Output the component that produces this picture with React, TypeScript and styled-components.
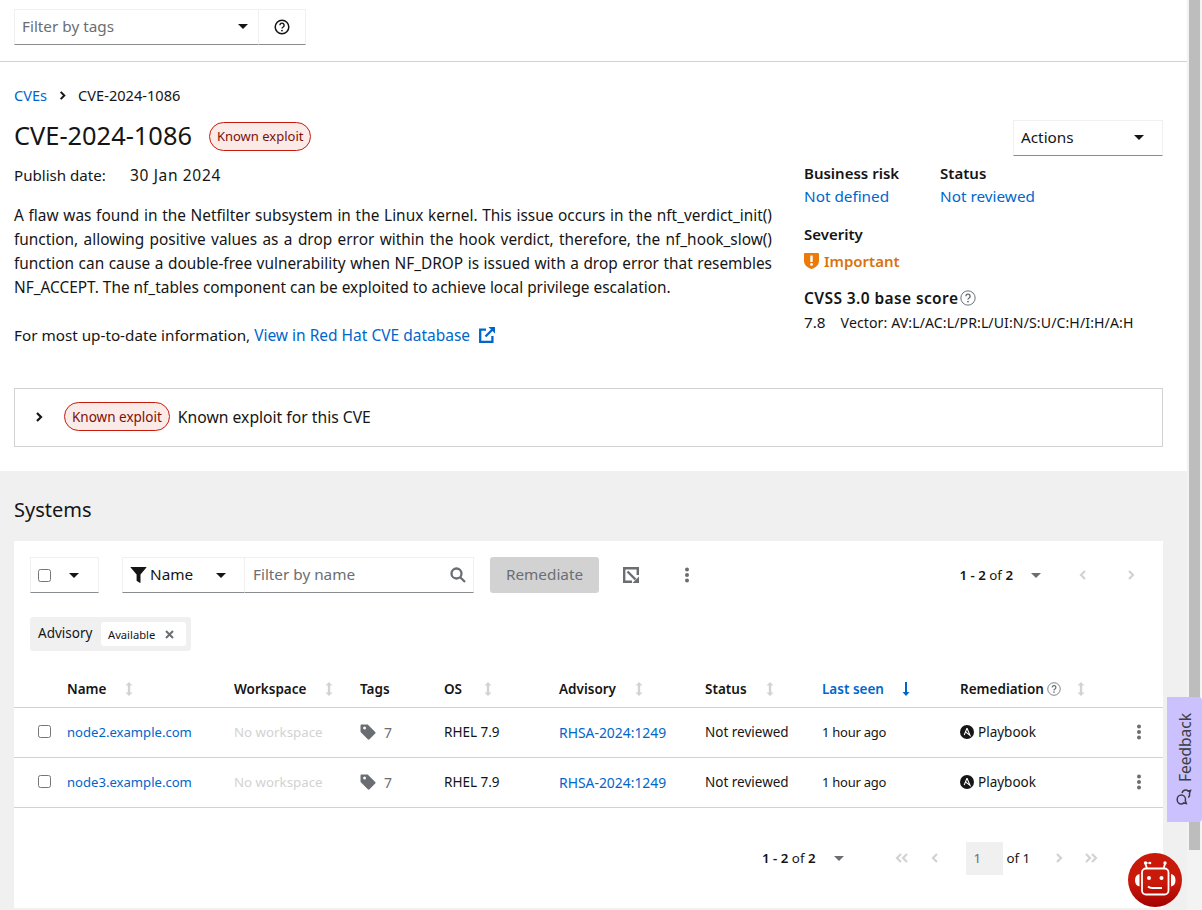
import React from "react";
import styled, { createGlobalStyle } from "styled-components";

const FONT = `"Noto Sans", "Open Sans", sans-serif`;
const GlobalStyle = createGlobalStyle`
  html, body { margin: 0; padding: 0; height: 910px; overflow: hidden; background: #f0f0f0; }
  body { font-family: ${FONT}; color: #151515; font-size: 15.3px; }
  * { box-sizing: border-box; }
`;

const Page = styled.div`width: 1188px; height: 910px; display: flex; flex-direction: column;`;
const TopBar = styled.div`background: #fff; height: 62px; border-bottom: 1px solid #d2d2d2; padding: 9px 14px 0; display: flex; align-items: flex-start;`;
const TagSelect = styled.div`width: 245px; height: 36px; display: flex; align-items: center; justify-content: space-between; padding: 0 10px 2px 7px; border: 1px solid #f0f0f0; border-bottom-color: #8a8d90; color: #6a6e73;`;
const HelpBox = styled.div`width: 47px; height: 36px; display: flex; align-items: center; justify-content: center; border: 1px solid #f0f0f0; border-left: 0; border-bottom-color: #8a8d90;`;
const Caret = styled.span<{ $c?: string }>`width: 0; height: 0; border-left: 5px solid transparent; border-right: 5px solid transparent; border-top: 5px solid ${(p) => p.$c || "#151515"}; display: inline-block;`;
const Details = styled.div`background: #fff; height: 409px; padding: 0 25px 0 14px; display: flex; flex-direction: column;`;
const Crumbs = styled.div`display: flex; align-items: center; gap: 11px; font-size: 14.6px; height: 20px; margin-top: 23px;`;
const Link = styled.a<{ $size?: number }>`color: #0066cc; text-decoration: none; font-size: ${(p) => (p.$size ? `${p.$size}px` : "inherit")};`;
const Columns = styled.div`display: flex; justify-content: space-between; height: 283px;`;
const LeftCol = styled.div`width: 758px;`;
const TitleRow = styled.div`display: flex; align-items: center; gap: 17px; height: 30px; margin-top: 15px;`;
const Title = styled.h1`margin: 0; font-size: 25.4px; font-weight: 400; color: #151515;`;
const Badge = styled.span<{ $size: number }>`height: 29px; padding: 0 7px; display: inline-flex; align-items: center; font-size: ${(p) => p.$size}px; color: #7d1007; background: #faeae8; border: 1px solid #c9190b; border-radius: 15px;`;
const TitleBadge = styled(Badge)`margin-top: 2px;`;
const Publish = styled.div`display: flex; margin-top: 13px; height: 24px; line-height: 24px;`;
const PublishLabel = styled.span`width: 116px; font-size: 15.1px;`;
const PublishDate = styled.span`font-size: 15.5px; letter-spacing: 0.65px;`;
const Desc = styled.p`margin: 17px 0 23px; line-height: 24px; text-align: justify; font-size: 15.4px;`;
const Info = styled.div`line-height: 24px; height: 24px; font-size: 15.25px; white-space: nowrap;`;
const Ext = styled.svg`width: 16px; height: 16px; margin-left: 9px; vertical-align: -2px; fill: none; stroke: #0066cc;`;
const RightCol = styled.div`width: 359px; display: flex; flex-direction: column; margin-top: 15px;`;
const ActionsRow = styled.div`display: flex; justify-content: flex-end;`;
const Actions = styled.div`width: 150px; height: 36px; display: flex; align-items: center; justify-content: space-between; padding: 0 18px 2px 7px; border: 1px solid #f0f0f0; border-bottom-color: #8a8d90;`;
const Pair = styled.div`display: flex; gap: 41px; margin-top: 5px;`;
const Field = styled.div<{ $top?: number }>`display: flex; flex-direction: column; margin-top: ${(p) => p.$top || 0}px;`;
const Label = styled.div`font-weight: 600; line-height: 24px; font-size: 15px;`;
const ScoreLabel = styled(Label)`display: flex; align-items: center; gap: 2px; font-size: 15.5px; letter-spacing: 0.4px;`;
const FieldValue = styled.div`line-height: 22px; color: #0066cc;`;
const Severity = styled.div`display: flex; align-items: center; gap: 5px; color: #d9730d; font-weight: 600; font-size: 15px; height: 24px; margin-top: 3px;`;
const Score = styled.div`display: flex; align-items: baseline; gap: 15px; line-height: 22px; margin-top: 1px;`;
const Vector = styled.span`font-size: 14.1px; letter-spacing: 0.1px; white-space: nowrap;`;
const Expand = styled.div`height: 59px; padding: 0 0 2px 19px; border: 1px solid #d2d2d2; display: flex; align-items: center; gap: 8px;`;
const ExpandChevron = styled.span`display: inline-flex; margin-right: 12px;`;
const ExpandText = styled.span`font-size: 15.7px;`;
const SystemsArea = styled.div`flex: 1; padding: 24px 25px 0 14px; display: flex; flex-direction: column;`;
const Heading = styled.h2`margin: 0 0 17px; font-size: 20px; font-weight: 400; line-height: 30px; height: 29px;`;
const Card = styled.div`background: #fff; flex: 1; margin-bottom: 2px; display: flex; flex-direction: column;`;
const Toolbar = styled.div`height: 60px; margin-top: 16px; padding-left: 16px; display: flex; align-items: flex-start;`;
const SelectAll = styled.div`width: 69px; height: 36px; display: flex; align-items: center; padding-left: 7px; gap: 18px; border: 1px solid #f0f0f0; border-bottom-color: #8a8d90;`;
const Check = styled.span`width: 13px; height: 13px; border: 1px solid #767676; border-radius: 2.5px; background: #fff; display: inline-block; flex: none;`;
const NameFilter = styled.div`width: 123px; height: 36px; margin-left: 23px; display: flex; align-items: center; padding-left: 7px; border: 1px solid #f0f0f0; border-bottom-color: #8a8d90;`;
const NameText = styled.span`margin: 0 0 2px 3px; width: 66px;`;
const Search = styled.div`width: 229px; height: 36px; display: flex; align-items: center; justify-content: space-between; padding: 0 7px 0 8px; color: #6a6e73; border: 1px solid #f0f0f0; border-left: 0; border-bottom-color: #8a8d90;`;
const SearchText = styled.span`margin-bottom: 2px;`;
const Remediate = styled.div`margin-left: 16px; width: 109px; height: 36px; padding-bottom: 2px; background: #d2d2d2; color: #6a6e73; border-radius: 3px; display: flex; align-items: center; justify-content: center;`;
const ToolIcon = styled.div<{ $w: number }>`width: ${(p) => p.$w}px; height: 36px; display: flex; align-items: center; justify-content: center; color: #6a6e73;`;
const Pager = styled.div`margin-left: auto; margin-right: 8px; height: 36px; display: flex; align-items: center; font-size: 13.3px;`;
const PagerStrong = styled.span`font-weight: 600;`;
const Chips = styled.div`height: 34px; margin: 0 0 0 16px; width: 161px; background: #f0f0f0; border-radius: 3px; display: flex; align-items: center; padding: 0 5px 2px 8px; font-size: 13.5px; justify-content: space-between;`;
const Chip = styled.div`width: 85px; height: 24px; margin-top: 2px; background: #fff; border-radius: 3px; display: flex; align-items: center; justify-content: space-between; padding: 0 12px 0 7px; font-size: 11.2px;`;
const Table = styled.div`display: grid; grid-template-columns: 53px 167px 126px 84px 115px 146px 117px 138px 203px; margin-top: 17px;`;
const HeadCell = styled.div<{ $active?: boolean }>`height: 40px; padding-top: 2px; border-bottom: 1px solid #d2d2d2; display: flex; align-items: center; font-size: 13.5px; font-weight: 600; color: ${(p) => (p.$active ? "#0066cc" : "#151515")};`;
const Cell = styled.div`height: 50px; padding-bottom: 1px; border-bottom: 1px solid #d2d2d2; display: flex; align-items: center; font-size: 13.5px;`;
const CheckCell = styled(Cell)`padding: 0 0 3px 24px;`;
const Muted = styled.span`color: #d2d2d2; font-size: 13.3px;`;
const Time = styled.span`font-size: 13px; letter-spacing: -0.25px;`;
const TagCount = styled.span`color: #6a6e73; margin-left: 8px; font-size: 14px;`;
const SortSpace = styled.span<{ $gap: number }>`display: inline-flex; margin-left: ${(p) => p.$gap}px;`;
const Kebab = styled.div`margin-left: auto; margin-right: 22px; display: flex;`;
const Playbook = styled.span`margin-left: 4px;`;
const Footer = styled.div`display: flex; align-items: center; padding-left: 748px; margin-top: 33px; height: 34px; font-size: 13.3px;`;
const PageInput = styled.div`width: 37px; height: 33px; background: #f0f0f0; color: #6a6e73; display: flex; align-items: center; padding-left: 8px;`;
const OfText = styled.span`margin-left: 4px; width: 20px; white-space: nowrap;`;
const Spacer = styled.span<{ $w: number }>`display: inline-flex; justify-content: center; flex: none; width: ${(p) => p.$w}px;`;
const Track = styled.div`position: fixed; left: 1187px; top: 0; width: 15px; height: 910px; background: #f3f3f3;`;
const Thumb = styled.div`position: fixed; left: 1189px; top: 0; width: 11px; height: 850px; background: #bdbdbd;`;
const FeedbackTab = styled.div`position: fixed; left: 1167px; top: 697px; width: 35px; height: 125px; padding-top: 1px; background: #cbc1ff; border-radius: 4px 0 0 4px; display: flex; align-items: center; justify-content: center; gap: 7px; writing-mode: vertical-rl; transform: rotate(180deg); color: #3c3f42; font-size: 15.5px;`;
const FeedbackIcon = styled.svg`transform: rotate(90deg);`;
const Bot = styled.div`position: fixed; left: 1128px; top: 853px; width: 54px; height: 54px; border-radius: 50%; background: linear-gradient(180deg, #c9190b 55%, #a30000 100%); display: flex; align-items: center; justify-content: center;`;

const Help = ({ s = 16, c = "#151515", w = 2 }: { s?: number; c?: string; w?: number }) => (
  <svg width={s} height={s} viewBox="0 0 16 16" fill="none">
    <circle cx="8" cy="8" r={8 - w / 2 - 0.2} stroke={c} strokeWidth={w * 0.75} />
    <path d="M5.900 6.200a2.100 2.100 0 1 1 3.200 1.800c-.7.4-1.100.8-1.100 1.600" stroke={c} strokeWidth={1.4} />
    <circle cx="8" cy="11.600" r=".9" fill={c} />
  </svg>
);
const Sort = () => (
  <svg width="8" height="14" viewBox="0 0 8 14" fill="#d2d2d2">
    <path d="M4 0 7.500 3.400H5.200v7.200h2.300L4 14 .5 10.600h2.300V3.400H.5z" />
  </svg>
);
const KebabIcon = ({ c = "#6a6e73" }: { c?: string }) => (
  <svg width="4" height="16" viewBox="0 0 4 16" fill={c}>
    <circle cx="2" cy="2.400" r="2" /><circle cx="2" cy="8" r="2" /><circle cx="2" cy="13.600" r="2" />
  </svg>
);
const TagIcon = () => (
  <svg width="16" height="16" viewBox="0 0 16 16" fill="#6a6e73">
    <path fillRule="evenodd" d="M.5 1.600C.5 1 1 .5 1.600.5h5.600c.4 0 .8.2 1 .4l7 7c.5.5.5 1.200 0 1.700l-5.700 5.700c-.5.5-1.200.5-1.700 0l-7-7c-.2-.2-.3-.6-.3-1zM4 5.300a1.400 1.400 0 1 0 0-2.600 1.400 1.400 0 0 0 0 2.600z" />
  </svg>
);
const Chevron = ({ d = "right", c = "#151515", s = 10 }: { d?: "right" | "left"; c?: string; s?: number }) => (
  <svg width={s} height={s} viewBox="0 0 10 10" fill="none" stroke={c} strokeWidth="2.200" transform={d === "left" ? "scale(-1 1)" : undefined}>
    <path d="M3 1l4 4-4 4" />
  </svg>
);
const DoubleChevron = ({ d = "right" }: { d?: "right" | "left" }) => (
  <svg width="14" height="10" viewBox="0 0 14 10" fill="none" stroke="#d2d2d2" strokeWidth="2.200" transform={d === "left" ? "scale(-1 1)" : undefined}>
    <path d="M2 1l4 4-4 4M8 1l4 4-4 4" />
  </svg>
);
const Ansible = () => (
  <svg width="14" height="14" viewBox="0 0 14 14">
    <circle cx="7" cy="7" r="7" fill="#151515" />
    <path d="M7 3.200 10 10.400 5.400 6.900" fill="none" stroke="#fff" strokeWidth="1.100" />
    <path d="M7 3.200 4.200 10" fill="none" stroke="#fff" strokeWidth="1.100" />
  </svg>
);

const rows = ["node2.example.com", "node3.example.com"];

export default function App() {
  return (
    <Page>
      <GlobalStyle />
      <TopBar>
        <TagSelect>Filter by tags<Caret /></TagSelect>
        <HelpBox><Help /></HelpBox>
      </TopBar>
      <Details>
        <Crumbs>
          <Link>CVEs</Link>
          <Chevron s={9} />
          <span>CVE-2024-1086</span>
        </Crumbs>
        <Columns>
          <LeftCol>
            <TitleRow><Title>CVE-2024-1086</Title><TitleBadge $size={13}>Known exploit</TitleBadge></TitleRow>
            <Publish><PublishLabel>Publish date:</PublishLabel><PublishDate>30 Jan 2024</PublishDate></Publish>
            <Desc>A flaw was found in the Netfilter subsystem in the Linux kernel. This issue occurs in the nft_verdict_init() function, allowing positive values as a drop error within the hook verdict, therefore, the nf_hook_slow() function can cause a double-free vulnerability when NF_DROP is issued with a drop error that resembles NF_ACCEPT. The nf_tables component can be exploited to achieve local privilege escalation.</Desc>
            <Info>For most up-to-date information, <Link $size={15.5}>View in Red Hat CVE database</Link>
              <Ext viewBox="0 0 16 16" strokeWidth="2.300">
                <path d="M7 2.600H1.200v12.200h12.200V9" />
                <path d="M6.500 9.500 13.500 2.500" />
                <path d="M9.500 0H16v6.500z" fill="#0066cc" stroke="none" />
              </Ext>
            </Info>
          </LeftCol>
          <RightCol>
            <ActionsRow><Actions>Actions<Caret /></Actions></ActionsRow>
            <Pair>
              <Field><Label>Business risk</Label><FieldValue>Not defined</FieldValue></Field>
              <Field><Label>Status</Label><FieldValue>Not reviewed</FieldValue></Field>
            </Pair>
            <Field $top={15}>
              <Label>Severity</Label>
              <Severity>
                <svg width="15" height="16" viewBox="0 0 15 16"><path fill="#ec7a08" d="M0 1.200C0 .6.5 0 1.200 0h12.600c.7 0 1.200.6 1.200 1.200v6.600C15 12 11.500 15 7.500 16 3.500 15 0 12 0 7.800z" /><rect x="6.300" y="2.600" width="2.400" height="6.400" rx=".5" fill="#fff" /><circle cx="7.500" cy="11.400" r="1.400" fill="#fff" /></svg>
                Important
              </Severity>
            </Field>
            <Field $top={13}>
              <ScoreLabel>CVSS 3.0 base score<Help c="#6a6e73" w={1.3} /></ScoreLabel>
              <Score>7.8<Vector>Vector: AV:L/AC:L/PR:L/UI:N/S:U/C:H/I:H/A:H</Vector></Score>
            </Field>
          </RightCol>
        </Columns>
        <Expand>
          <ExpandChevron><Chevron s={10} /></ExpandChevron>
          <Badge $size={13.5}>Known exploit</Badge>
          <ExpandText>Known exploit for this CVE</ExpandText>
        </Expand>
      </Details>
      <SystemsArea>
        <Heading>Systems</Heading>
        <Card>
          <Toolbar>
            <SelectAll><Check /><Caret /></SelectAll>
            <NameFilter>
              <svg width="17" height="16" viewBox="0 0 16 16" fill="#151515"><path d="M.3 0h15.400c.3 0 .4.3.2.5L10 7.400v8c0 .4-.4.7-.8.4L6.400 14a.6.6 0 0 1-.3-.5V7.400L.1.5C-.1.3 0 0 .3 0z" /></svg>
              <NameText>Name</NameText><Caret />
            </NameFilter>
            <Search><SearchText>Filter by name</SearchText>
              <svg width="16" height="16" viewBox="0 0 16 16" fill="none" stroke="#6a6e73" strokeWidth="2.300"><circle cx="6.500" cy="6.500" r="5" /><path d="M10.200 10.200 15 15" /></svg>
            </Search>
            <Remediate>Remediate</Remediate>
            <ToolIcon $w={64}>
              <svg width="16" height="16" viewBox="0 0 16 16" fill="none" stroke="#6a6e73" strokeWidth="2.400">
                <path d="M9 14.800H1.200V1.200h13.600V8" />
                <path d="M4.500 4.500 12.500 12.500" />
                <path fill="#6a6e73" stroke="none" d="M16 16H9.500L16 9.500z" />
              </svg>
            </ToolIcon>
            <ToolIcon $w={48}><KebabIcon /></ToolIcon>
            <Pager>
              <PagerStrong>1 - 2</PagerStrong>&nbsp;of&nbsp;<PagerStrong>2</PagerStrong>
              <Spacer $w={46}><Caret $c="#6a6e73" /></Spacer>
              <Spacer $w={48}><Chevron d="left" c="#d2d2d2" /></Spacer>
              <Spacer $w={48}><Chevron c="#d2d2d2" /></Spacer>
            </Pager>
          </Toolbar>
          <Chips>Advisory<Chip>Available<svg width="9" height="9" viewBox="0 0 9 9" stroke="#6a6e73" strokeWidth="2"><path d="M1 1l7 7M8 1l-7 7" /></svg></Chip></Chips>
          <Table>
            <HeadCell />
            <HeadCell>Name<SortSpace $gap={19}><Sort /></SortSpace></HeadCell>
            <HeadCell>Workspace<SortSpace $gap={19}><Sort /></SortSpace></HeadCell>
            <HeadCell>Tags</HeadCell>
            <HeadCell>OS<SortSpace $gap={22}><Sort /></SortSpace></HeadCell>
            <HeadCell>Advisory<SortSpace $gap={19}><Sort /></SortSpace></HeadCell>
            <HeadCell>Status<SortSpace $gap={19}><Sort /></SortSpace></HeadCell>
            <HeadCell $active>Last seen<SortSpace $gap={18}><svg width="8" height="14" viewBox="0 0 8 14" fill="#0066cc"><path d="M3 0h2v10h2.500L4 14 .5 10H3z" /></svg></SortSpace></HeadCell>
            <HeadCell>Remediation<SortSpace $gap={3}><Help s={14} c="#6a6e73" w={1.3} /></SortSpace><SortSpace $gap={16}><Sort /></SortSpace></HeadCell>
            {rows.map((r) => (
              <React.Fragment key={r}>
                <CheckCell><Check /></CheckCell>
                <Cell><Link $size={13.1}>{r}</Link></Cell>
                <Cell><Muted>No workspace</Muted></Cell>
                <Cell><TagIcon /><TagCount>7</TagCount></Cell>
                <Cell>RHEL 7.9</Cell>
                <Cell><Link $size={13.9}>RHSA-2024:1249</Link></Cell>
                <Cell>Not reviewed</Cell>
                <Cell><Time>1 hour ago</Time></Cell>
                <Cell><Ansible /><Playbook>Playbook</Playbook><Kebab><KebabIcon /></Kebab></Cell>
              </React.Fragment>
            ))}
          </Table>
          <Footer>
            <PagerStrong>1 - 2</PagerStrong>&nbsp;of&nbsp;<PagerStrong>2</PagerStrong>
            <Spacer $w={46}><Caret $c="#6a6e73" /></Spacer>
            <Spacer $w={20} />
            <Spacer $w={40}><DoubleChevron d="left" /></Spacer>
            <Spacer $w={26}><Chevron d="left" c="#d2d2d2" /></Spacer>
            <Spacer $w={18} />
            <PageInput>1</PageInput><OfText>of 1</OfText>
            <Spacer $w={8} />
            <Spacer $w={48}><Chevron c="#d2d2d2" /></Spacer>
            <Spacer $w={16}><DoubleChevron /></Spacer>
          </Footer>
        </Card>
      </SystemsArea>
      <Track />
      <Thumb />
      <FeedbackTab>
        <FeedbackIcon width="16" height="16" viewBox="0 0 16 16" fill="none" stroke="#3c3f42" strokeWidth="1.500">
          <path d="M5.500 1.200C3 1.200 1 3 1 5.200c0 1 .4 1.900 1.100 2.600L1.500 10.300l2.700-1c.4.100.8.200 1.300.2 2.500 0 4.500-1.900 4.500-4.200S8 1.200 5.500 1.200z" />
          <path d="M11.800 6c1.900.4 3.200 1.800 3.200 3.600 0 1-.4 1.900-1.100 2.500l.6 2.400-2.700-1c-1.500.4-3.300-.1-4.400-1.200" />
        </FeedbackIcon>
        Feedback
      </FeedbackTab>
      <Bot>
        <svg width="44" height="44" viewBox="-2 -2 44 44" fill="none" stroke="#fff" strokeWidth="1.800">
          <rect x="7" y="8.500" width="26.500" height="26" rx="4" />
          <path d="M12 8.500 10.500 4M28.500 8.500 30 4" />
          <circle cx="10.500" cy="3" r="1.700" fill="#fff" stroke="none" /><circle cx="30" cy="3" r="1.700" fill="#fff" stroke="none" /><circle cx="15" cy="3" r="1.300" fill="#fff" stroke="none" />
          <path d="M11 3h4" strokeWidth="1" />
          <circle cx="14" cy="18" r="2" fill="#fff" stroke="none" /><circle cx="26.500" cy="18" r="2" fill="#fff" stroke="none" />
          <path d="M13 26.500c1.500 1.500 3 1.500 4.500 1.500H27" />
          <path d="M4.500 14v12.500C1.500 26 0 23.500 0 20.250S1.500 14.500 4.500 14zM36 14v12.500c3-.5 4.500-3 4.500-6.250S39 14.500 36 14z" fill="#fff" stroke="none" />
        </svg>
      </Bot>
    </Page>
  );
}
